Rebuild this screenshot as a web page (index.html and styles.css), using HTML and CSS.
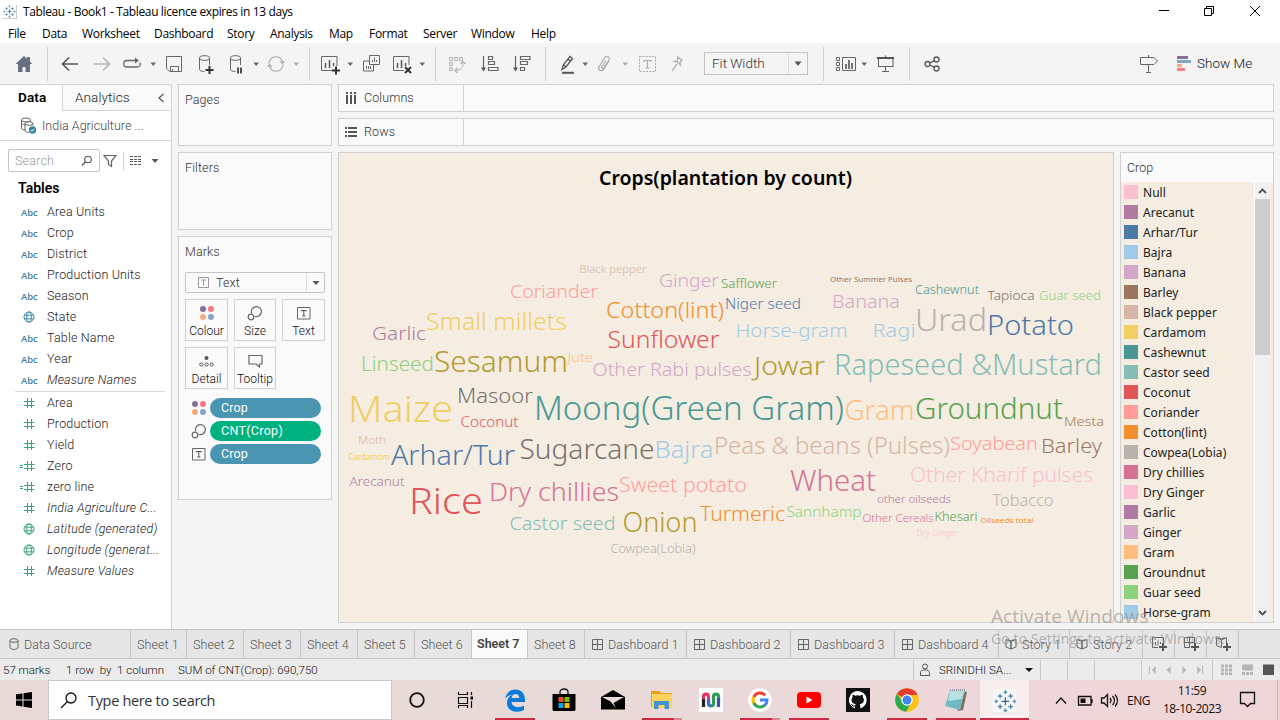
FILE: index.html
```html
<!DOCTYPE html>
<html lang="en">
<head>
<meta charset="utf-8">
<title>Tableau - Book1</title>
<link rel="stylesheet" href="styles.css">
</head>
<body>
<svg class="defs" aria-hidden="true">
  <defs>
    <symbol id="caret" viewBox="0 0 8 24"><path d="M1.5 10.5h5.500L4.250 14z" fill="#666"/></symbol>
    <symbol id="caret-off" viewBox="0 0 8 24"><path d="M1.5 10.5h5.500L4.250 14z" fill="#aaa"/></symbol>
    <symbol id="globe" viewBox="0 0 12 12"><g fill="none" stroke="currentColor"><circle cx="6" cy="6" r="5"/><ellipse cx="6" cy="6" rx="2.3" ry="5"/><path d="M1.5 4.2h9M1.5 7.8h9"/></g></symbol>
    <symbol id="hash" viewBox="0 0 16 12"><path d="M7.5 1v10M11.500 1v10M4 4.500h10.500M4 8.500h10.500" fill="none" stroke="currentColor"/></symbol>
    <symbol id="hash-calc" viewBox="0 0 16 12"><path d="M7.500 1v10M11.500 1v10M4 4.500h10.500M4 8.500h10.500M0 5.500h3M0 7.500h3" fill="none" stroke="currentColor"/></symbol>
    <symbol id="dots" viewBox="0 0 14 14"><circle cx="3" cy="3" r="3" fill="#84709a"/><circle cx="11" cy="3" r="3" fill="#fb7687"/><circle cx="3" cy="11" r="3" fill="#f3a97b"/><circle cx="11" cy="11" r="3" fill="#85a6cc"/></symbol>
    <symbol id="size" viewBox="0 0 16 16"><g fill="none" stroke="#666" stroke-width="1.200"><path d="M4.700 8.300A5 5 0 1 1 7.700 11.300"/><circle cx="4" cy="12" r="2.800"/></g></symbol>
    <symbol id="textbox" viewBox="0 0 14 14"><path d="M.5 1.500h12.500v11.500H.500z" fill="none" stroke="#666"/><path d="M4.300 5.500v-1h5v1M6.800 4.500v5.500M5.300 10h3" fill="none" stroke="#555"/></symbol>
    <symbol id="dash" viewBox="0 0 12 12"><path d="M1.500 1.500h10v10h-10zM6.500 1.500v10M1.500 6.500h10" fill="none" stroke="#666"/></symbol>
    <symbol id="story" viewBox="0 0 12 12"><path d="M6 3.500V11L1 9V1.500zM6 3.500V11L11 9V1.500zM3 1.500l3 1.500 3-1.500" fill="none" stroke="#666"/></symbol>
    <symbol id="plus" viewBox="0 0 8 8"><path d="M4 0v8M0 4h8" stroke="#555" stroke-width="2"/></symbol>
    <symbol id="sparkle" viewBox="0 0 24 24"><g stroke-width="1.400" fill="none"><path d="M12 8v8M8 12h8" stroke="#2c6c9c"/><path d="M6.500 4v5M4 6.500h5M17.500 4v5M15 6.500h5M6.500 15v5M4 17.500h5M17.500 15v5M15 17.500h5" stroke="#4789ae"/><path d="M12 .5v4M10 2.500h4M12 19.500v4M10 21.500h4M2.500 10v4M.5 12h4M21.500 10v4M19.500 12h4" stroke="#5996b8"/></g></symbol>
  </defs>
</svg>
<div class="app">
  <header class="titlebar">
    <svg class="logo" viewBox="0 0 24 24"><use href="#sparkle"/></svg>
    <span class="title">Tableau - Book1 - Tableau licence expires in 13 days</span>
    <svg class="winctl" width="110" height="20" viewBox="0 0 110 20" fill="none" stroke="#000" stroke-width="1"><path d="M4 9.500h10M49.500 7.500h7v7h-7zM51.500 7.500v-2h7v7h-2M95 5l10 10M105 5L95 15"/></svg>
  </header>
  <nav class="menu"><span>File</span><span>Data</span><span>Worksheet</span><span>Dashboard</span><span>Story</span><span>Analysis</span><span>Map</span><span>Format</span><span>Server</span><span>Window</span><span>Help</span></nav>
  <div class="toolbar">
    <svg class="ic" viewBox="0 0 24 24"><path d="M3.500 12L12 4l3 2.800V5h3v4.700l2.500 2.300h-2.500v8h-4.500v-5h-3v5H6v-8z" fill="#66707f"/></svg>
    <i class="sep"></i>
    <svg class="ic" viewBox="0 0 24 24"><path d="M20 12H5M11 5.500L4.500 12l6.500 6.500" fill="none" stroke="#555" stroke-width="1.600"/></svg>
    <svg class="ic" viewBox="0 0 24 24"><path d="M4 12h15M13 5.500l6.500 6.500-6.500 6.500" fill="none" stroke="#b4b4b4" stroke-width="1.600"/></svg>
    <svg class="ic" viewBox="0 0 24 24"><path d="M16 8.500H7a3 3 0 0 0 0 6.500h10.500a3 3 0 0 0 2.500-4.500" fill="none" stroke="#666" stroke-width="1.300"/><path d="M15 5.500l4 3-4 3z" fill="#666"/></svg>
    <svg class="ct"><use href="#caret"/></svg>
    <svg class="ic" viewBox="0 0 24 24"><path d="M4.500 4.500h15v15h-12l-3-3zM8.500 19.500v-5h8v5M10.500 19.500v-2.500" fill="none" stroke="#666"/></svg>
    <svg class="ic" viewBox="0 0 24 24"><g fill="none" stroke="#666"><path d="M5.500 6v11.500c0 1 2 2 5 2M15.500 6v7"/><ellipse cx="10.500" cy="6" rx="5" ry="2.300"/></g><path d="M15.500 14v8M11.500 18h8" stroke="#333" stroke-width="2"/></svg>
    <svg class="ic" viewBox="0 0 24 24"><g fill="none" stroke="#666"><path d="M6.500 6v11.500c0 1 2 2 5 2M16.500 6v7"/><ellipse cx="11.500" cy="6" rx="5" ry="2.300"/></g><path d="M14 15.500v6M17 15.500v6" stroke="#333" stroke-width="1.700"/></svg>
    <svg class="ct"><use href="#caret"/></svg>
    <svg class="ic" viewBox="0 0 24 24"><path d="M5 11a7 7 0 0 1 13.500-1.500M19 13a7 7 0 0 1-13.500 1.500" fill="none" stroke="#b4b4b4" stroke-width="1.300"/><path d="M15.500 9h5.500l-2.500 4zM3 15l2.500-4 3 4z" fill="#b4b4b4"/></svg>
    <svg class="ct"><use href="#caret-off"/></svg>
    <i class="sep"></i>
    <svg class="ic" viewBox="0 0 24 24"><path d="M15 18.500H3.500v-14h15.500V14" fill="none" stroke="#666"/><path d="M7.500 11v5M11.500 8v8M15.500 11v3" stroke="#555" stroke-width="1.500"/><path d="M18 14.500v8M14 18.500h8" stroke="#333" stroke-width="2"/></svg>
    <svg class="ct"><use href="#caret"/></svg>
    <svg class="ic" viewBox="0 0 24 24"><path d="M10.500 3.500h10v9h-10zM10.500 9h-6v10h10v-6.500M13.500 10V8M15.500 10V5.500M17.500 10V8M7.500 17v-3M9.500 17v-3M11.500 17v-3" fill="none" stroke="#666"/></svg>
    <svg class="ic" viewBox="0 0 24 24"><path d="M14 18.500H3.500v-14h15.500V13" fill="none" stroke="#666"/><path d="M7.500 11v5M11.500 8v8M15.500 11v3" stroke="#555" stroke-width="1.500"/><path d="M15 15l6 6M21 15l-6 6" stroke="#333" stroke-width="2"/></svg>
    <svg class="ct"><use href="#caret"/></svg>
    <i class="sep"></i>
    <svg class="ic" viewBox="0 0 24 24" fill="none" stroke="#b4b4b4"><path d="M4.500 5.500h3v3h-3zM9.500 5.500h3v3h-3zM14.500 5.500h3v3h-3zM4.500 10.500h3v3h-3zM4.500 15.500h3v3h-3zM18 10.500c0 5-2 8-7.500 8"/><path d="M15.500 12l2.500-2.500 2.500 2.500M12.500 16l-2.500 2.500 2.500 2.500" stroke-width="1.500"/></svg>
    <svg class="ic" viewBox="0 0 24 24"><path d="M5.500 4v14M10.500 4.500h4v3h-4zM10.500 9.500h6v3h-6zM10.500 15.500h9.500v3h-9.500z" fill="none" stroke="#666" stroke-width="1.200"/><path d="M3 15.500h5l-2.500 4z" fill="#555"/></svg>
    <svg class="ic" viewBox="0 0 24 24"><path d="M5.500 4v14M10.500 4.500h9.500v3h-9.500zM10.500 9.500h7v3h-7zM10.500 15.500h4v3h-4z" fill="none" stroke="#666" stroke-width="1.200"/><path d="M3 15.500h5l-2.500 4z" fill="#555"/></svg>
    <i class="sep"></i>
    <svg class="ic" viewBox="0 0 24 24"><path d="M6 17.500l1.500-5L14 4.500l2.500 2-6.500 8.500zM7.500 12.500l2.500 2.500M12 7l2.500 2" fill="none" stroke="#555" stroke-width="1.300"/><path d="M6 20.800h12" stroke="#555" stroke-width="2"/></svg>
    <svg class="ct"><use href="#caret"/></svg>
    <svg class="ic" viewBox="0 0 24 24"><path d="M16 9l-5.500 8.500c-2.500 2.500-6 .5-4.500-2.500L11.500 6c2-3 6-1 4.500 2L11 15.500c-1 1.500-3 .5-2-1L13 8.500" fill="none" stroke="#aaa" stroke-width="1.200"/></svg>
    <svg class="ct"><use href="#caret-off"/></svg>
    <svg class="ic" viewBox="0 0 24 24"><path d="M4.500 4.500h16v15h-16z" fill="none" stroke="#aaa" stroke-dasharray="2 1.200"/><path d="M9 10V8.500h7V10M12.500 8.500v7.500M10.500 16h4" fill="none" stroke="#aaa" stroke-width="1.200"/></svg>
    <svg class="ic" viewBox="0 0 24 24"><path d="M12 4.500l5.500 4M13 5.300l-1 5M16.500 8l-2 4.500M8 9.500c3-.5 6 .5 8 4.500M12 11.800l-5 7" fill="none" stroke="#aaa" stroke-width="1.300"/></svg>
    <div class="fit"><span>Fit Width</span><b><svg width="10" height="6"><path d="M1.500 .5h7L5 5z" fill="#555"/></svg></b></div>
    <i class="sep"></i>
    <svg class="ic" viewBox="0 0 24 24"><path d="M1.500 5.500h3v3h-3zM1.500 10.500h3v3h-3zM1.500 15.500h3v3h-3zM7.500 5.500h13v13h-13z" fill="none" stroke="#666"/><path d="M11 12v5M14 8v9M17 11v6" stroke="#555" stroke-width="1.600"/></svg>
    <svg class="ct"><use href="#caret"/></svg>
    <svg class="ic" viewBox="0 0 24 24"><path d="M5.500 6v8.500h14.500V6M12.500 3.500v2M12.500 15v5M9 19.500h7" fill="none" stroke="#666" stroke-width="1.100"/><path d="M4 6h17" stroke="#555" stroke-width="2"/></svg>
    <i class="sep"></i>
    <svg class="ic" viewBox="0 0 24 24"><g fill="none" stroke="#555" stroke-width="1.300"><circle cx="7.500" cy="12" r="2.500"/><circle cx="16.500" cy="7.500" r="2.500"/><circle cx="16.500" cy="16.500" r="2.500"/><path d="M9.700 11l4.600-2.400M9.700 13l4.600 2.400"/></g></svg>
    <svg class="ic" viewBox="0 0 24 24"><path d="M4.500 5.500h13.500l3.500 3.500-3.500 3.500H4.500zM12.500 3v2.500M12.500 12.500v8M10 20.500h5" fill="none" stroke="#666"/></svg>
    <div class="showme"><svg width="15" height="16"><path d="M0 0h11v3H0z" fill="#84709a"/><path d="M0 4h14v3H0z" fill="#85a6cc"/><path d="M0 8h5v3H0z" fill="#f3a97b"/><path d="M0 12h8v3H0z" fill="#fb7687"/></svg><span>Show Me</span></div>
  </div>

  <main class="work">
    <aside class="data">
      <div class="dtabs"><b>Data</b><span>Analytics<svg width="8" height="10"><path d="M6.500 1L2 5l4.500 4" fill="none" stroke="#555" stroke-width="1.200"/></svg></span></div>
      <div class="source"><svg width="17" height="17" viewBox="0 0 17 17"><g fill="none" stroke="#666"><ellipse cx="6" cy="3" rx="4.500" ry="2"/><path d="M1.500 3v8c0 1.500 2 2 4 2M2 6.500c1 1.300 2.500 1.500 3.500 1.500M10.500 3v1"/><ellipse cx="9" cy="6.500" rx="4" ry="1.800"/><path d="M5 6.500v7c0 1 2 2 4 2M13 6.500v2"/></g><circle cx="12.500" cy="13" r="3.700" fill="#3a83a3"/><path d="M10.800 13l1.200 1.300 2.200-2.500" fill="none" stroke="#fff"/></svg><span>India Agriculture ...</span></div>
      <div class="find">
        <div class="search"><span>Search</span><svg width="12" height="12"><circle cx="7" cy="4.500" r="3.300" fill="none" stroke="#555" stroke-width="1.100"/><path d="M4.500 7L1 10.500" stroke="#555" stroke-width="1.300"/></svg></div>
        <svg class="funnel" width="14" height="14"><path d="M1 1.500h12L8.500 7v5.500l-3-2V7z" fill="none" stroke="#666" stroke-width="1.200"/></svg>
        <i></i>
        <svg class="listic" width="12" height="11"><path d="M0 1.500h12M0 4.500h12M0 6.500h12M0 9.500h12" stroke="#555" stroke-dasharray="3 1"/></svg>
        <svg width="8" height="6"><path d="M.5 1h7L4 5z" fill="#555"/></svg>
      </div>
      <h3>Tables</h3>
      <ul class="fields dims">
        <li><em>Abc</em>Area Units</li><li><em>Abc</em>Crop</li><li><em>Abc</em>District</li><li><em>Abc</em>Production Units</li><li><em>Abc</em>Season</li>
        <li><svg class="gl"><use href="#globe"/></svg>State</li><li><em>Abc</em>Table Name</li><li><em>Abc</em>Year</li><li class="it"><em>Abc</em><span>Measure Names</span></li>
      </ul>
      <ul class="fields meas">
        <li><svg class="hs"><use href="#hash"/></svg>Area</li><li><svg class="hs"><use href="#hash"/></svg>Production</li><li><svg class="hs"><use href="#hash"/></svg>Yield</li>
        <li><svg class="hs"><use href="#hash-calc"/></svg>Zero</li><li><svg class="hs"><use href="#hash-calc"/></svg>zero line</li>
        <li class="it"><svg class="hs"><use href="#hash"/></svg><span>India Agriculture C...</span></li>
        <li class="it"><svg class="gl"><use href="#globe"/></svg><span>Latitude (generated)</span></li>
        <li class="it"><svg class="gl"><use href="#globe"/></svg><span>Longitude (generat...</span></li>
        <li class="it"><svg class="hs"><use href="#hash"/></svg><span>Measure Values</span></li>
      </ul>
    </aside>

    <section class="cards">
      <div class="card pages">Pages</div>
      <div class="card filters">Filters</div>
      <div class="card marks">Marks
        <div class="marktype"><svg width="11" height="11"><path d="M.5 .5h10v10H.500zM3 3h5M5.500 3v5.500" fill="none" stroke="#999"/></svg><span>Text</span><b><svg width="8" height="6"><path d="M.5 1h7L4 5z" fill="#555"/></svg></b></div>
        <div class="btns">
          <div><svg width="14" height="14"><use href="#dots"/></svg>Colour</div>
          <div><svg width="16" height="16"><use href="#size"/></svg>Size</div>
          <div><svg width="14" height="14"><use href="#textbox"/></svg>Text</div>
          <div><svg width="15" height="14" viewBox="0 0 15 14"><circle cx="7.500" cy="4" r="2" fill="#555"/><g fill="none" stroke="#555"><circle cx="2.300" cy="10.500" r="1.600"/><circle cx="7.500" cy="10.500" r="1.600"/><circle cx="12.700" cy="10.500" r="1.600"/></g></svg>Detail</div>
          <div><svg width="15" height="14" viewBox="0 0 15 14"><path d="M1 1.500h13v8.500h-2.500v3L8 10H1z" fill="none" stroke="#666" stroke-width="1.200"/></svg>Tooltip</div>
        </div>
        <div class="pill"><svg width="14" height="14"><use href="#dots"/></svg><span>Crop</span></div>
        <div class="pill green"><svg width="16" height="16"><use href="#size"/></svg><span>CNT(Crop)</span></div>
        <div class="pill"><svg width="14" height="14"><use href="#textbox"/></svg><span>Crop</span></div>
      </div>
    </section>

    <section class="canvas">
      <div class="shelf"><label><svg width="12" height="12"><path d="M2 0v2M2 3v9M6 0v2M6 3v9M10 0v2M10 3v9" stroke="#555" stroke-width="2"/></svg><span>Columns</span></label></div>
      <div class="shelf"><label><svg width="12" height="12"><path d="M0 2h2M3 2h9M0 6h2M3 6h9M0 10h2M3 10h9" stroke="#555" stroke-width="2"/></svg><span>Rows</span></label></div>
      <div class="row">
        <div class="view">
          <svg class="cloud" width="774" height="469" viewBox="339 153 774 469">
            <text class="heading" x="599" y="184.500" textLength="253" lengthAdjust="spacingAndGlyphs">Crops(plantation by count)</text>
            <text x="579.500" y="273" font-size="11.500" fill="#d7b5a6" textLength="67" lengthAdjust="spacingAndGlyphs">Black pepper</text>
            <text x="510" y="298" font-size="18.500" fill="#ff9d9a" textLength="88" lengthAdjust="spacingAndGlyphs">Coriander</text>
            <text x="426" y="330" font-size="23.500" fill="#f1ce63" textLength="141" lengthAdjust="spacingAndGlyphs">Small millets</text>
            <text x="372" y="340" font-size="19" fill="#b07aa1" textLength="54" lengthAdjust="spacingAndGlyphs">Garlic</text>
            <text x="361" y="371" font-size="19.500" fill="#8cd17d" textLength="73" lengthAdjust="spacingAndGlyphs">Linseed</text>
            <text x="434" y="371.500" font-size="29" fill="#b6992d" class="l" textLength="134" lengthAdjust="spacingAndGlyphs">Sesamum</text>
            <text x="567.500" y="362" font-size="12" fill="#ffbe7d" textLength="25.500" lengthAdjust="spacingAndGlyphs">Jute</text>
            <text x="592.500" y="376" font-size="18.500" fill="#d4a6c8" textLength="159" lengthAdjust="spacingAndGlyphs">Other Rabi pulses</text>
            <text x="659" y="287" font-size="18.500" fill="#d4a6c8" textLength="60" lengthAdjust="spacingAndGlyphs">Ginger</text>
            <text x="606" y="317.500" font-size="22" fill="#f28e2b" textLength="118" lengthAdjust="spacingAndGlyphs">Cotton(lint)</text>
            <text x="607.500" y="348" font-size="23" fill="#e15759" textLength="112" lengthAdjust="spacingAndGlyphs">Sunflower</text>
            <text x="348" y="421.500" font-size="37" fill="#f1ce63" textLength="105" lengthAdjust="spacingAndGlyphs">Maize</text>
            <text x="457" y="403" font-size="20.500" fill="#79706e" textLength="76" lengthAdjust="spacingAndGlyphs">Masoor</text>
            <text x="460.500" y="427" font-size="15" fill="#e15759" textLength="58" lengthAdjust="spacingAndGlyphs">Coconut</text>
            <text x="534" y="419.500" font-size="33" fill="#499894" textLength="310" lengthAdjust="spacingAndGlyphs">Moong(Green Gram)</text>
            <text x="358" y="444" font-size="11.500" fill="#d7b5a6" textLength="28" lengthAdjust="spacingAndGlyphs">Moth</text>
            <text x="348.500" y="460" font-size="8" fill="#f1ce63" class="m" textLength="41" lengthAdjust="spacingAndGlyphs">Cardamom</text>
            <text x="391" y="464.500" font-size="28" fill="#4e79a7" textLength="124" lengthAdjust="spacingAndGlyphs">Arhar/Tur</text>
            <text x="519.500" y="458.500" font-size="27" fill="#79706e" textLength="135" lengthAdjust="spacingAndGlyphs">Sugarcane</text>
            <text x="654.500" y="458" font-size="23.500" fill="#a0cbe8" textLength="59" lengthAdjust="spacingAndGlyphs">Bajra</text>
            <text x="714" y="453.500" font-size="23.500" fill="#d7b5a6" textLength="236" lengthAdjust="spacingAndGlyphs">Peas &amp; beans (Pulses)</text>
            <text x="349.500" y="486" font-size="13" fill="#b07aa1" textLength="55" lengthAdjust="spacingAndGlyphs">Arecanut</text>
            <text x="409" y="514" font-size="36.500" fill="#e15759" textLength="74" lengthAdjust="spacingAndGlyphs">Rice</text>
            <text x="489" y="500.500" font-size="26" fill="#d37295" textLength="130" lengthAdjust="spacingAndGlyphs">Dry chillies</text>
            <text x="619" y="492" font-size="19.500" fill="#ff9d9a" textLength="128" lengthAdjust="spacingAndGlyphs">Sweet potato</text>
            <text x="509.500" y="530" font-size="18.500" fill="#86bcb6" textLength="106" lengthAdjust="spacingAndGlyphs">Castor seed</text>
            <text x="622.500" y="531.500" font-size="27" fill="#b6992d" textLength="75" lengthAdjust="spacingAndGlyphs">Onion</text>
            <text x="610.500" y="553" font-size="12.500" fill="#bab0ac" textLength="85" lengthAdjust="spacingAndGlyphs">Cowpea(Lobia)</text>
            <text x="700" y="521" font-size="19.500" fill="#f28e2b" textLength="85" lengthAdjust="spacingAndGlyphs">Turmeric</text>
            <text x="721" y="288" font-size="12" fill="#59a14f" textLength="56" lengthAdjust="spacingAndGlyphs">Safflower</text>
            <text x="725" y="309" font-size="15" fill="#4e79a7" textLength="76" lengthAdjust="spacingAndGlyphs">Niger seed</text>
            <text x="830" y="282" font-size="7.500" fill="#9d7660" class="m" textLength="82" lengthAdjust="spacingAndGlyphs">Other Summer Pulses</text>
            <text x="915" y="294" font-size="12" fill="#499894" textLength="64" lengthAdjust="spacingAndGlyphs">Cashewnut</text>
            <text x="832" y="308" font-size="18" fill="#d4a6c8" textLength="68" lengthAdjust="spacingAndGlyphs">Banana</text>
            <text x="987.500" y="300" font-size="13" fill="#79706e" textLength="47" lengthAdjust="spacingAndGlyphs">Tapioca</text>
            <text x="1039" y="300" font-size="13" fill="#8cd17d" textLength="62" lengthAdjust="spacingAndGlyphs">Guar seed</text>
            <text x="735.500" y="337" font-size="19" fill="#a0cbe8" textLength="112" lengthAdjust="spacingAndGlyphs">Horse-gram</text>
            <text x="872.500" y="337" font-size="19" fill="#a0cbe8" textLength="43" lengthAdjust="spacingAndGlyphs">Ragi</text>
            <text x="915" y="331" font-size="31" fill="#bab0ac" textLength="72" lengthAdjust="spacingAndGlyphs">Urad</text>
            <text x="987" y="334.500" font-size="27" fill="#4e79a7" textLength="87" lengthAdjust="spacingAndGlyphs">Potato</text>
            <text x="754" y="374.500" font-size="25.500" fill="#b6992d" textLength="71" lengthAdjust="spacingAndGlyphs">Jowar</text>
            <text x="834" y="374.500" font-size="28.500" fill="#86bcb6" textLength="268" lengthAdjust="spacingAndGlyphs">Rapeseed &amp;Mustard</text>
            <text x="844.500" y="420" font-size="27" fill="#ffbe7d" textLength="70" lengthAdjust="spacingAndGlyphs">Gram</text>
            <text x="915" y="418.500" font-size="29.500" fill="#59a14f" class="l" textLength="148" lengthAdjust="spacingAndGlyphs">Groundnut</text>
            <text x="1064" y="426" font-size="13" fill="#9d7660" textLength="40" lengthAdjust="spacingAndGlyphs">Mesta</text>
            <text x="950" y="450" font-size="18.500" fill="#ff9d9a" textLength="88" lengthAdjust="spacingAndGlyphs">Soyabean</text>
            <text x="1041" y="453" font-size="20" fill="#9d7660" textLength="61" lengthAdjust="spacingAndGlyphs">Barley</text>
            <text x="790" y="490.500" font-size="28.500" fill="#d37295" textLength="86" lengthAdjust="spacingAndGlyphs">Wheat</text>
            <text x="910" y="482" font-size="19.500" fill="#fabfd2" textLength="183" lengthAdjust="spacingAndGlyphs">Other Kharif pulses</text>
            <text x="877" y="503" font-size="11.500" fill="#b07aa1" textLength="74" lengthAdjust="spacingAndGlyphs">other oilseeds</text>
            <text x="992.500" y="506" font-size="16.500" fill="#bab0ac" textLength="61" lengthAdjust="spacingAndGlyphs">Tobacco</text>
            <text x="786.500" y="517" font-size="15" fill="#8cd17d" textLength="75" lengthAdjust="spacingAndGlyphs">Sannhamp</text>
            <text x="862.500" y="522" font-size="11.500" fill="#d37295" textLength="71" lengthAdjust="spacingAndGlyphs">Other Cereals</text>
            <text x="934.500" y="521" font-size="12.500" fill="#59a14f" textLength="43" lengthAdjust="spacingAndGlyphs">Khesari</text>
            <text x="980.500" y="523" font-size="7.500" fill="#f28e2b" class="m" textLength="53" lengthAdjust="spacingAndGlyphs">Oilseeds total</text>
            <text x="916.500" y="536" font-size="8.500" fill="#fabfd2" textLength="41" lengthAdjust="spacingAndGlyphs">Dry Ginger</text>
          </svg>
        </div>
        <div class="legend">
          <div class="lh">Crop</div>
          <div class="lb">
            <ul>
              <li><i class="c-pink"></i>Null</li><li><i class="c-purple"></i>Arecanut</li><li><i class="c-blue"></i>Arhar/Tur</li><li><i class="c-sky"></i>Bajra</li><li><i class="c-lilac"></i>Banana</li><li><i class="c-brown"></i>Barley</li><li><i class="c-tan"></i>Black pepper</li><li><i class="c-yellow"></i>Cardamom</li><li><i class="c-teal"></i>Cashewnut</li><li><i class="c-aqua"></i>Castor seed</li><li><i class="c-red"></i>Coconut</li><li><i class="c-salmon"></i>Coriander</li><li><i class="c-orange"></i>Cotton(lint)</li><li><i class="c-grey"></i>Cowpea(Lobia)</li><li><i class="c-rose"></i>Dry chillies</li><li><i class="c-pink"></i>Dry Ginger</li><li><i class="c-purple"></i>Garlic</li><li><i class="c-lilac"></i>Ginger</li><li><i class="c-peach"></i>Gram</li><li><i class="c-green"></i>Groundnut</li><li><i class="c-lime"></i>Guar seed</li><li><i class="c-sky"></i>Horse-gram</li>
            </ul>
            <div class="scroll"><svg width="9" height="6"><path d="M1 5l3.500-3.500L8 5" fill="none" stroke="#505050" stroke-width="1.800"/></svg><i></i><svg width="9" height="6"><path d="M1 1l3.500 3.500L8 1" fill="none" stroke="#505050" stroke-width="1.800"/></svg></div>
          </div>
        </div>
      </div>
    </section>
  </main>

  <nav class="tabs">
    <span class="ds"><svg width="10" height="12"><path d="M1 2.500v7c0 2.500 8 2.500 8 0v-7" fill="none" stroke="#666"/><ellipse cx="5" cy="2.500" rx="4" ry="1.800" fill="none" stroke="#666"/></svg>Data Source</span>
    <span>Sheet 1</span><span>Sheet 2</span><span>Sheet 3</span><span>Sheet 4</span><span>Sheet 5</span><span>Sheet 6</span><span class="on">Sheet 7</span><span>Sheet 8</span>
    <span><svg width="12" height="12"><use href="#dash"/></svg>Dashboard 1</span><span><svg width="12" height="12"><use href="#dash"/></svg>Dashboard 2</span><span><svg width="12" height="12"><use href="#dash"/></svg>Dashboard 3</span><span><svg width="12" height="12"><use href="#dash"/></svg>Dashboard 4</span>
    <span><svg width="12" height="12"><use href="#story"/></svg>Story 1</span><span><svg width="12" height="12"><use href="#story"/></svg>Story 2</span>
    <span class="new"><svg width="17" height="16"><path d="M7 11.500H1.500v-10h11V7M4.500 6v3.500M7 4.500v5M9.500 6v2" fill="none" stroke="#666"/><use href="#plus" x="8" y="7" width="8" height="8"/></svg></span>
    <span class="new"><svg width="17" height="16"><path d="M7 11.500H1.500v-10h10V7M1.500 6.500h10M6.500 1.500v10" fill="none" stroke="#666"/><use href="#plus" x="8" y="7" width="8" height="8"/></svg></span>
    <span class="new"><svg width="17" height="16"><path d="M6.500 4v7.500l-5-2v-8l5 2.500zM6.500 4l5-2.500V7M3.500 1.500l3 1.500 3-1.500" fill="none" stroke="#666"/><use href="#plus" x="8" y="7" width="8" height="8"/></svg></span>
  </nav>
  <div class="status">
    <span class="s1">57 marks</span><span class="s2">1 row&nbsp; by&nbsp; 1 column</span><span class="s3">SUM of CNT(Crop): 690,750</span>
    <div class="user"><svg width="12" height="14"><circle cx="6" cy="3.500" r="2.500" fill="none" stroke="#555"/><path d="M1.500 12.500v-3c0-1.500 1.500-2.500 3-2.500h3c1.500 0 3 1 3 2.500v3z" fill="none" stroke="#555"/></svg><span>SRINIDHI SA...</span><svg width="8" height="6"><path d="M0 1h8L4 5z" fill="#111"/></svg></div>
    <i></i><i></i><i class="wide"></i>
    <svg class="pager" width="71" height="20" viewBox="0 0 71 20" fill="#b8b8b8"><path d="M8 6v8H7V6zM14 6v8l-4-4zM29 6v8l-4-4zM41 6v8l4-4zM56 6v8l4-4zM61 6v8h1V6z"/></svg>
    <svg class="modes" width="67" height="20" viewBox="0 0 67 20"><path d="M8 4.500h3v3H8zM12 4.500h3v3h-3zM16 4.500h3v3h-3zM8 8.500h3v3H8zM12 8.500h3v3h-3zM16 8.500h3v3h-3zM8 12.500h3v2.500H8zM12 12.500h3v2.500h-3zM16 12.500h3v2.500h-3zM29 4.500h11v6H29zM29 12h3v3h-3zM33 12h3v3h-3zM37 12h3v3h-3z" fill="#b4b4b4"/><path d="M50 4.500h11V15H50z" fill="#555"/></svg>
  </div>

  <footer class="taskbar">
    <div class="start"><svg width="16" height="16"><path d="M0 2.300l6.500-.9v6H0zM7.500 1.200L16 0v7.400H7.500zM0 8.500h6.500v6L0 13.600zM7.500 8.500H16V16l-8.500-1.200z" fill="#000"/></svg></div>
    <div class="tsearch"><svg width="17" height="17"><circle cx="11" cy="6" r="5" fill="none" stroke="#111" stroke-width="1.300"/><path d="M7.500 9.500L1 16" stroke="#111" stroke-width="1.300"/></svg><span>Type here to search</span></div>
    <div class="apps">
      <span><svg width="16" height="16"><circle cx="8" cy="8" r="6.800" fill="none" stroke="#111" stroke-width="1.800"/></svg></span>
      <span><svg width="17" height="16"><path d="M1.500 0v2.500h9V0M1.500 5.500h9v6h-9zM1.500 16v-2.500h9V16M14.500 0v3M14.500 9v7" fill="none" stroke="#111" stroke-width="1.200"/><path d="M13.500 4.500h2.500v3h-2.500z"/></svg></span>
      <span class="run"><svg width="22" height="23" viewBox="0 0 22 23"><path d="M1 10C2 4 6 .5 11.500 .5 17 .5 21 4.500 21 10.500V13H7.500c.3 3.200 3 5 6.500 5 2.300 0 4.300-.6 6-1.600v4.700c-2 1.100-4.300 1.700-7.200 1.700C6.500 22.800 3 19 3 14c0-4 2-6.800 5.500-8.200C5 6 2.500 7.500 1 10zm6.600-1h7.600c0-2.300-1.300-3.900-3.700-3.900C9.500 5.100 8 6.700 7.600 9z" fill="#0a7bd8" fill-rule="evenodd"/></svg></span>
      <span><svg width="24" height="24"><path d="M.5 6h23v16l-1 1h-21l-1-1z"/><path d="M8 8V4c0-4 8-4 8 0v4" fill="none" stroke="#111" stroke-width="1.300"/><path d="M6.500 9h5v5h-5z" fill="#f25022"/><path d="M12.500 9h5v5h-5z" fill="#7fba00"/><path d="M6.500 15h5v5h-5z" fill="#00a4ef"/><path d="M12.500 15h5v5h-5z" fill="#ffb900"/></svg></span>
      <span><svg width="24" height="20"><path d="M0 7L12 0l12 7v12.500H0z"/><path d="M1 7h22L12.500 13l2.500 5L9.500 11.500z" fill="#eadbd8"/></svg></span>
      <span class="run multi"><svg width="21" height="20"><path d="M0 1h9l1.500 2H21v14H0z" fill="#e3a21a"/><path d="M1 4h20v14H1z" fill="#ffd35e"/><path d="M3 19v-8h15v8h-4.500v-4h-6v4z" fill="#3f93d0"/></svg></span>
      <span><svg width="24" height="24"><path d="M0 0h24v24H0z" fill="#fff"/><g fill="none" stroke-width="3.200"><path d="M4.500 12V8.500c0-3.200 5-3.200 5 0V15" stroke="#e7356b"/><path d="M4.500 11v8" stroke="#222"/><path d="M9.500 11v4c0 2 .5 3 2.500 3" stroke="#2f75c8"/><path d="M12 18c2 0 2.500-1 2.500-3V8.500c0-3.200 5-3.200 5 0V12" stroke="#2d9d54"/><path d="M19.500 10v9" stroke="#3b54ab"/></g></svg></span>
      <span class="run multi"><svg width="24" height="24"><circle cx="12" cy="12" r="11.800" fill="#fff"/><g fill="none" stroke-width="3"><path d="M17.200 7.200A7 7 0 0 0 5.800 9" stroke="#ea4335"/><path d="M5.800 8.800a7 7 0 0 0 0 6.600" stroke="#fbbc05"/><path d="M5.800 15a7 7 0 0 0 11 2.200" stroke="#34a853"/><path d="M16.500 17.500A7 7 0 0 0 19 12h-7" stroke="#4285f4"/></g></svg></span>
      <span class="run"><svg width="24" height="24"><rect y="4" width="24" height="16" rx="4" fill="#f00"/><path d="M9.500 8.500v7l6-3.500z" fill="#fff"/></svg></span>
      <span><svg width="24" height="24"><path d="M0 0h24v24H0z" fill="#111"/><path d="M12 3a9 9 0 0 0-3 17.500v-2c-2 .4-3-.5-3.500-1.800l-.8-.9c1.300-.3 1.800 1.700 3 1.700h1.500c.1-.6.300-1 .6-1.200-2.400-.3-4.300-1.400-4.300-4.500 0-1 .4-2 1-2.600-.2-.8-.1-1.700.2-2.500 1 0 1.800.5 2.500 1a9 9 0 0 1 5 0c.7-.5 1.500-1 2.500-1 .3.800.3 1.700.2 2.500.6.700 1 1.500 1 2.600 0 3.100-2 4.200-4.300 4.500.5.400.7 1 .7 2v2.300A9 9 0 0 0 12 3z" fill="#fff"/></svg></span>
      <span class="run"><svg width="24" height="24" viewBox="0 0 24 24"><circle cx="12" cy="12" r="11.800" fill="#fbc116"/><path d="M12 12L1.800 6.100A11.800 11.800 0 0 1 22.200 6.100V7H12z" fill="#e33b2e"/><path d="M1.800 6.100A11.800 11.800 0 0 0 11 23.800L16.500 14H8z" fill="#2da94f"/><circle cx="12" cy="12" r="5.700" fill="#fff"/><circle cx="12" cy="12" r="4.500" fill="#4285f4"/></svg></span>
      <span class="run"><svg width="24" height="24"><path d="M7 2l16 2-4 18-5 1z" fill="#80705e"/><path d="M6 2l15 1-5 19-15-4z" fill="#70b9c4"/><path d="M6 2l14 1-2 8-14 2z" fill="#b7dfe4"/><path d="M6 2h15" stroke="#666" stroke-dasharray="1 1"/></svg></span>
      <span class="run cur"><svg width="23" height="23" viewBox="-1 -1 26 26"><path d="M-1-1h26v26H-1z" fill="#f7f7f7"/><use href="#sparkle"/></svg></span>
    </div>
    <svg class="tray" width="93" height="40" viewBox="1028 680 93 40" fill="none" stroke="#111" stroke-width="1.300"><path d="M1056 703.500l5-5.500 5 5.500M1078.500 696.500h12.500v8.500h-12.500zM1092 699v4"/><path d="M1080.500 698.500h5v4.500h-5z" fill="#111" stroke="none"/><path d="M1101.500 698h2.500l3.500-3.500v12l-3.500-3.500h-2.500zM1110 698q2 2.500 0 5M1112.500 696q4 4.500 0 9M1115 694.500q5 6 0 12"/></svg>
    <span class="lang">ENG</span>
    <div class="clock"><span>11:59</span><span>18-10-2023</span></div>
    <svg class="note" width="18" height="18"><path d="M1.500 1.500h14v11h-4l-3 3-3-3h-4z" fill="none" stroke="#111" stroke-width="1.300"/></svg>
    <i class="peek"></i>
  </footer>
  <div class="watermark"><p>Activate Windows</p><span>Go to Settings to activate Windows.</span></div>
</div>
</body>
</html>
```
FILE: styles.css
```css
* { box-sizing: border-box; }
body { margin: 0; font-family: Roboto, "Liberation Sans", sans-serif; font-weight: 350; font-size: 12.5px; color: #333; }
ul, h3, p { margin: 0; padding: 0; list-style: none; }
svg { display: block; flex: none; }
.defs { position: absolute; width: 0; height: 0; }
.app { position: relative; width: 1280px; height: 720px; overflow: hidden; display: flex; flex-direction: column; background: #f4f4f4; }
.titlebar { height: 24px; background: #fff; display: flex; align-items: center; padding: 0 15px 0 3px; font: 12px "Open Sans", sans-serif; color: #000; flex: none; }
.logo { width: 14px; height: 14px; margin-right: 6px; border-right: 1px solid #ccc; border-bottom: 1px solid #ccc; }
.title { flex: 1; letter-spacing: -.37px; white-space: nowrap; margin-top: -2px; }
.winctl { margin-bottom: 3px; }
.menu { height: 19px; flex: none; background: #fff; color: #000; display: grid; grid-template-columns: 34px 40px 72px 73px 43px 59px 40px 54px 48px 60px 40px; padding-left: 8px; font: 12px/19px "Open Sans", sans-serif; letter-spacing: -.3px; }
.toolbar { height: 41px; flex: none; display: grid; align-items: center; padding-left: 12px; grid-template-columns: 35px 11px 32px 30px 29px 13px 32px 30px 28px 12px 28px 17px 9px 28px 13px 31px 28px 17px 10px 33px 32px 35px 11px 25px 12px 28px 14px 30px 39px 119px 12px 25px 13px 36px 11px 216px 41px 100px; }
.ic { width: 24px; height: 24px; }
.ct { width: 8px; height: 24px; }
.sep { width: 1px; height: 34px; background: #d0d0d0; }
.fit { width: 104px; height: 23px; border: 1px solid #c4c4c4; display: flex; justify-content: space-between; padding-left: 7px; font-size: 13.5px; line-height: 21px; color: #333; }
.fit b { width: 19px; border-left: 1px solid #ddd; display: grid; place-items: center; }
.showme { display: flex; gap: 5px; align-items: center; font-size: 13.5px; color: #111; white-space: nowrap; }
.showme span { margin-top: -1px; }
.work { height: 545px; flex: none; display: flex; }
.data { width: 172px; background: #fff; border-right: 1px solid #d0d0d0; border-top: 1px solid #d4d4d4; }
.dtabs { height: 26px; display: flex; font-size: 13.5px; line-height: 25px; color: #222; }
.dtabs b { width: 62px; padding-left: 18px; color: #000; font-weight: 600; letter-spacing: .1px; }
.dtabs span { flex: 1; background: #fafafa; border-left: 1px solid #d4d4d4; border-bottom: 1px solid #d4d4d4; padding: 0 6px 0 12px; display: flex; justify-content: space-between; align-items: center; letter-spacing: .1px; }
.source { height: 30px; border-bottom: 1px solid #d4d4d4; display: flex; align-items: center; gap: 5px; padding-left: 20px; color: #444; letter-spacing: .02px; }
.source span { margin-top: -1px; }
.find { display: flex; align-items: center; padding: 8px 0 0 8px; }
.search { width: 92px; height: 23px; border: 1px solid #c4c4c4; border-radius: 2px; display: flex; align-items: center; justify-content: space-between; padding: 0 6px; color: #999; letter-spacing: .2px; }
.funnel { margin-left: 3px; }
.find > i { width: 1px; height: 18px; background: #d0d0d0; margin: 0 6px 0 6px; }
.listic { margin-right: 9px; }
.data h3 { font: 600 14px/20px Roboto, sans-serif; color: #000; padding-left: 18px; margin-top: 6px; }
.fields { color: #333; letter-spacing: .17px; }
.fields li { height: 21px; display: grid; grid-template-columns: 29px 1fr; padding-left: 18px; align-items: center; line-height: 21px; white-space: nowrap; color: #222; }
.dims { padding-top: 3px; }
.fields em { font: 600 9.500px "Open Sans", sans-serif; color: #47819b; padding-left: 3px; letter-spacing: -.1px; margin-top: 1px; }
.gl { width: 12px; height: 12px; margin-left: 5px; color: #3f8ba6; }
.hs { width: 16px; height: 12px; margin-left: 2px; color: #3aa37a; }
.meas .gl { color: #3aa37a; }
.meas { padding-top: 2px; position: relative; }
.meas::before { content: ""; position: absolute; left: 15px; right: 6px; top: 1px; border-top: 1px solid #d8d8d8; }
.it { font-style: italic; }
.it em { font-style: normal; }
.cards { width: 166px; padding-left: 6px; display: flex; flex-direction: column; gap: 6px; }
.card { width: 154px; background: #fafafa; border: 1px solid #d0d0d0; padding: 5px 6px 6px; line-height: 19px; color: #333; letter-spacing: .1px; }
.pages { height: 62px; } .filters { height: 78px; } .marks { height: 264px; }
.marktype { height: 21px; margin-top: 11px; border: 1px solid #c4c4c4; border-radius: 2px; display: flex; align-items: center; padding-left: 12px; }
.marktype span { flex: 1; padding-left: 7px; }
.marktype b { width: 18px; height: 19px; border-left: 1px solid #ddd; display: grid; place-items: center; }
.btns { display: grid; grid-template-columns: 43px 42px 43px; gap: 6px; margin-top: 6px; }
.btns div { height: 42px; border: 1px solid #d0d0d0; display: flex; flex-direction: column; align-items: center; justify-content: space-between; padding-top: 5px; line-height: 17px; color: #111; font-size: 12px; letter-spacing: 0; }
.btns svg { height: 16px; }
.pill { display: grid; grid-template-columns: 25px 111px; align-items: center; height: 20px; margin-top: 3px; }
.btns + .pill { margin-top: 9px; }
.pill svg { justify-self: center; margin-right: -3px; }
.pill span { background: #4a96b2; color: #fff; border-radius: 10px; height: 20px; line-height: 20px; padding-left: 11px; font-weight: 400; }
.pill.green span { background: #00b180; letter-spacing: .3px; }
.canvas { display: flex; flex-direction: column; gap: 6px; width: 936px; }
.shelf { height: 28px; border: 1px solid #d0d0d0; background: #fafafa; flex: none; }
.shelf label { display: flex; align-items: center; width: 125px; height: 26px; gap: 7px; padding-left: 6px; border-right: 1px solid #d0d0d0; color: #333; letter-spacing: .1px; }
.shelf label span { margin-top: -1px; }
.row { display: flex; gap: 6px; height: 471px; }
.view { width: 776px; background: #f5ede1; border: 1px solid #d0d0d0; }
.cloud text { font-family: "Noto Sans", "Open Sans", sans-serif; font-weight: 330; }
.cloud .l { font-weight: 350; }
.cloud .m { font-weight: 400; }
.cloud .heading { font-weight: 600; font-size: 19px; fill: #000; }
.legend { width: 154px; border: 1px solid #d0d0d0; display: flex; flex-direction: column; }
.lh { height: 29px; line-height: 30px; background: #fafafa; padding-left: 6px; color: #333; flex: none; }
.lb { flex: 1; background: #f5ede1; display: flex; justify-content: space-between; overflow: hidden; }
.lb ul { padding: 0 0 0 3px; font: 12px/20px "Noto Sans", sans-serif; color: #222; }
.lb li { height: 20px; display: flex; align-items: center; gap: 5px; letter-spacing: .03px; padding-top: 1px; }
.lb i { width: 14px; height: 14px; margin-top: -1px; }
.c-pink { background: #fabfd2; } .c-purple { background: #b07aa1; } .c-blue { background: #4e79a7; } .c-sky { background: #a0cbe8; } .c-lilac { background: #d4a6c8; } .c-brown { background: #9d7660; } .c-tan { background: #d7b5a6; } .c-yellow { background: #f1ce63; } .c-teal { background: #499894; } .c-aqua { background: #86bcb6; } .c-red { background: #e15759; } .c-salmon { background: #ff9d9a; } .c-orange { background: #f28e2b; } .c-grey { background: #bab0ac; } .c-rose { background: #d37295; } .c-peach { background: #ffbe7d; } .c-green { background: #59a14f; } .c-lime { background: #8cd17d; }
.scroll { width: 16px; margin-right: 3px; background: #f0f0f0; border-left: 1px solid #fff; display: flex; flex-direction: column; align-items: center; padding: 6px 0; }
.scroll i { width: 15px; height: 156px; background: #cdcdcd; margin: 5px 0 auto; }
.tabs { height: 30px; flex: none; border-top: 1px solid #c4c4c4; border-bottom: 1px solid #c4c4c4; background: #e6e6e6; display: grid; grid-template-columns: 131px 56px 57px 57px 57px 57px 57px 56px 57px 102px 104px 104px 104px 71px 73px 32px 32px 32px; }
.tabs span { border-right: 1px solid #c8c8c8; display: flex; align-items: center; gap: 5px; padding-left: 6px; color: #555; white-space: nowrap; letter-spacing: .08px; }
.tabs .ds { padding-left: 9px; }
.tabs .on { background: #fafafa; font-weight: 600; color: #444; letter-spacing: 0; padding: 0 0 1px 5px; }
.tabs .new { padding-left: 8px; }
.status { height: 21px; flex: none; background: #ebebeb; display: flex; align-items: center; font-size: 11.500px; color: #111; white-space: nowrap; }
.status .s1 { width: 66px; padding-left: 3px; }
.status .s2 { width: 112px; }
.status .s3 { flex: 1; }
.user { width: 128px; height: 20px; border-left: 1px solid #c8c8c8; border-right: 1px solid #c8c8c8; display: flex; align-items: center; padding: 0 7px 0 5px; gap: 8px; }
.user span { flex: 1; font-size: 11.5px; }
.status > i { width: 27px; height: 20px; border-right: 1px solid #c8c8c8; }
.status > .wide { width: 47px; }
.pager { border-right: 1px solid #c8c8c8; }
.taskbar { height: 40px; flex: none; background: linear-gradient(90deg, #e8d9d6, #e8dad8 45%, #eed7da 75%, #eed5d8); display: flex; align-items: center; color: #111; font-family: "Open Sans", sans-serif; font-weight: 400; }
.start { width: 48px; display: grid; place-items: center; }
.tsearch { width: 344px; height: 40px; background: #fff; border: 1px solid #c8c8c8; display: flex; align-items: center; padding-left: 11px; gap: 11px; font-size: 14.5px; color: #333; letter-spacing: -.33px; }
.apps { display: flex; height: 40px; }
.apps span { width: 49px; display: grid; place-items: center; background: linear-gradient(#cc2a44, #cc2a44) no-repeat center bottom / 0 2px; }
.apps .run { background-size: 40px 2px; }
.apps .multi { background-image: linear-gradient(90deg, #cc2a44 80%, #df8592 80%); }
.apps .cur { background-color: #f8eeef; background-size: 49px 2px; }
.tray { margin-left: -1px; }
.lang { width: 36px; padding-left: 6px; font-size: 12px; letter-spacing: -.5px; }
.clock { width: 70px; display: flex; flex-direction: column; align-items: center; font-size: 12px; line-height: 18px; letter-spacing: -.45px; }
.note { margin-left: 12px; }
.peek { width: 1px; height: 40px; background: #c9b5b7; margin-left: 20px; }
.watermark { position: absolute; left: 991px; top: 603px; font-family: "Open Sans", sans-serif; font-weight: 400; color: rgba(140, 140, 140, .62); white-space: nowrap; }
.watermark p { font-size: 19px; line-height: 26px; letter-spacing: .1px; }
.watermark span { display: block; font-size: 14px; line-height: 20px; letter-spacing: .12px; }
```
